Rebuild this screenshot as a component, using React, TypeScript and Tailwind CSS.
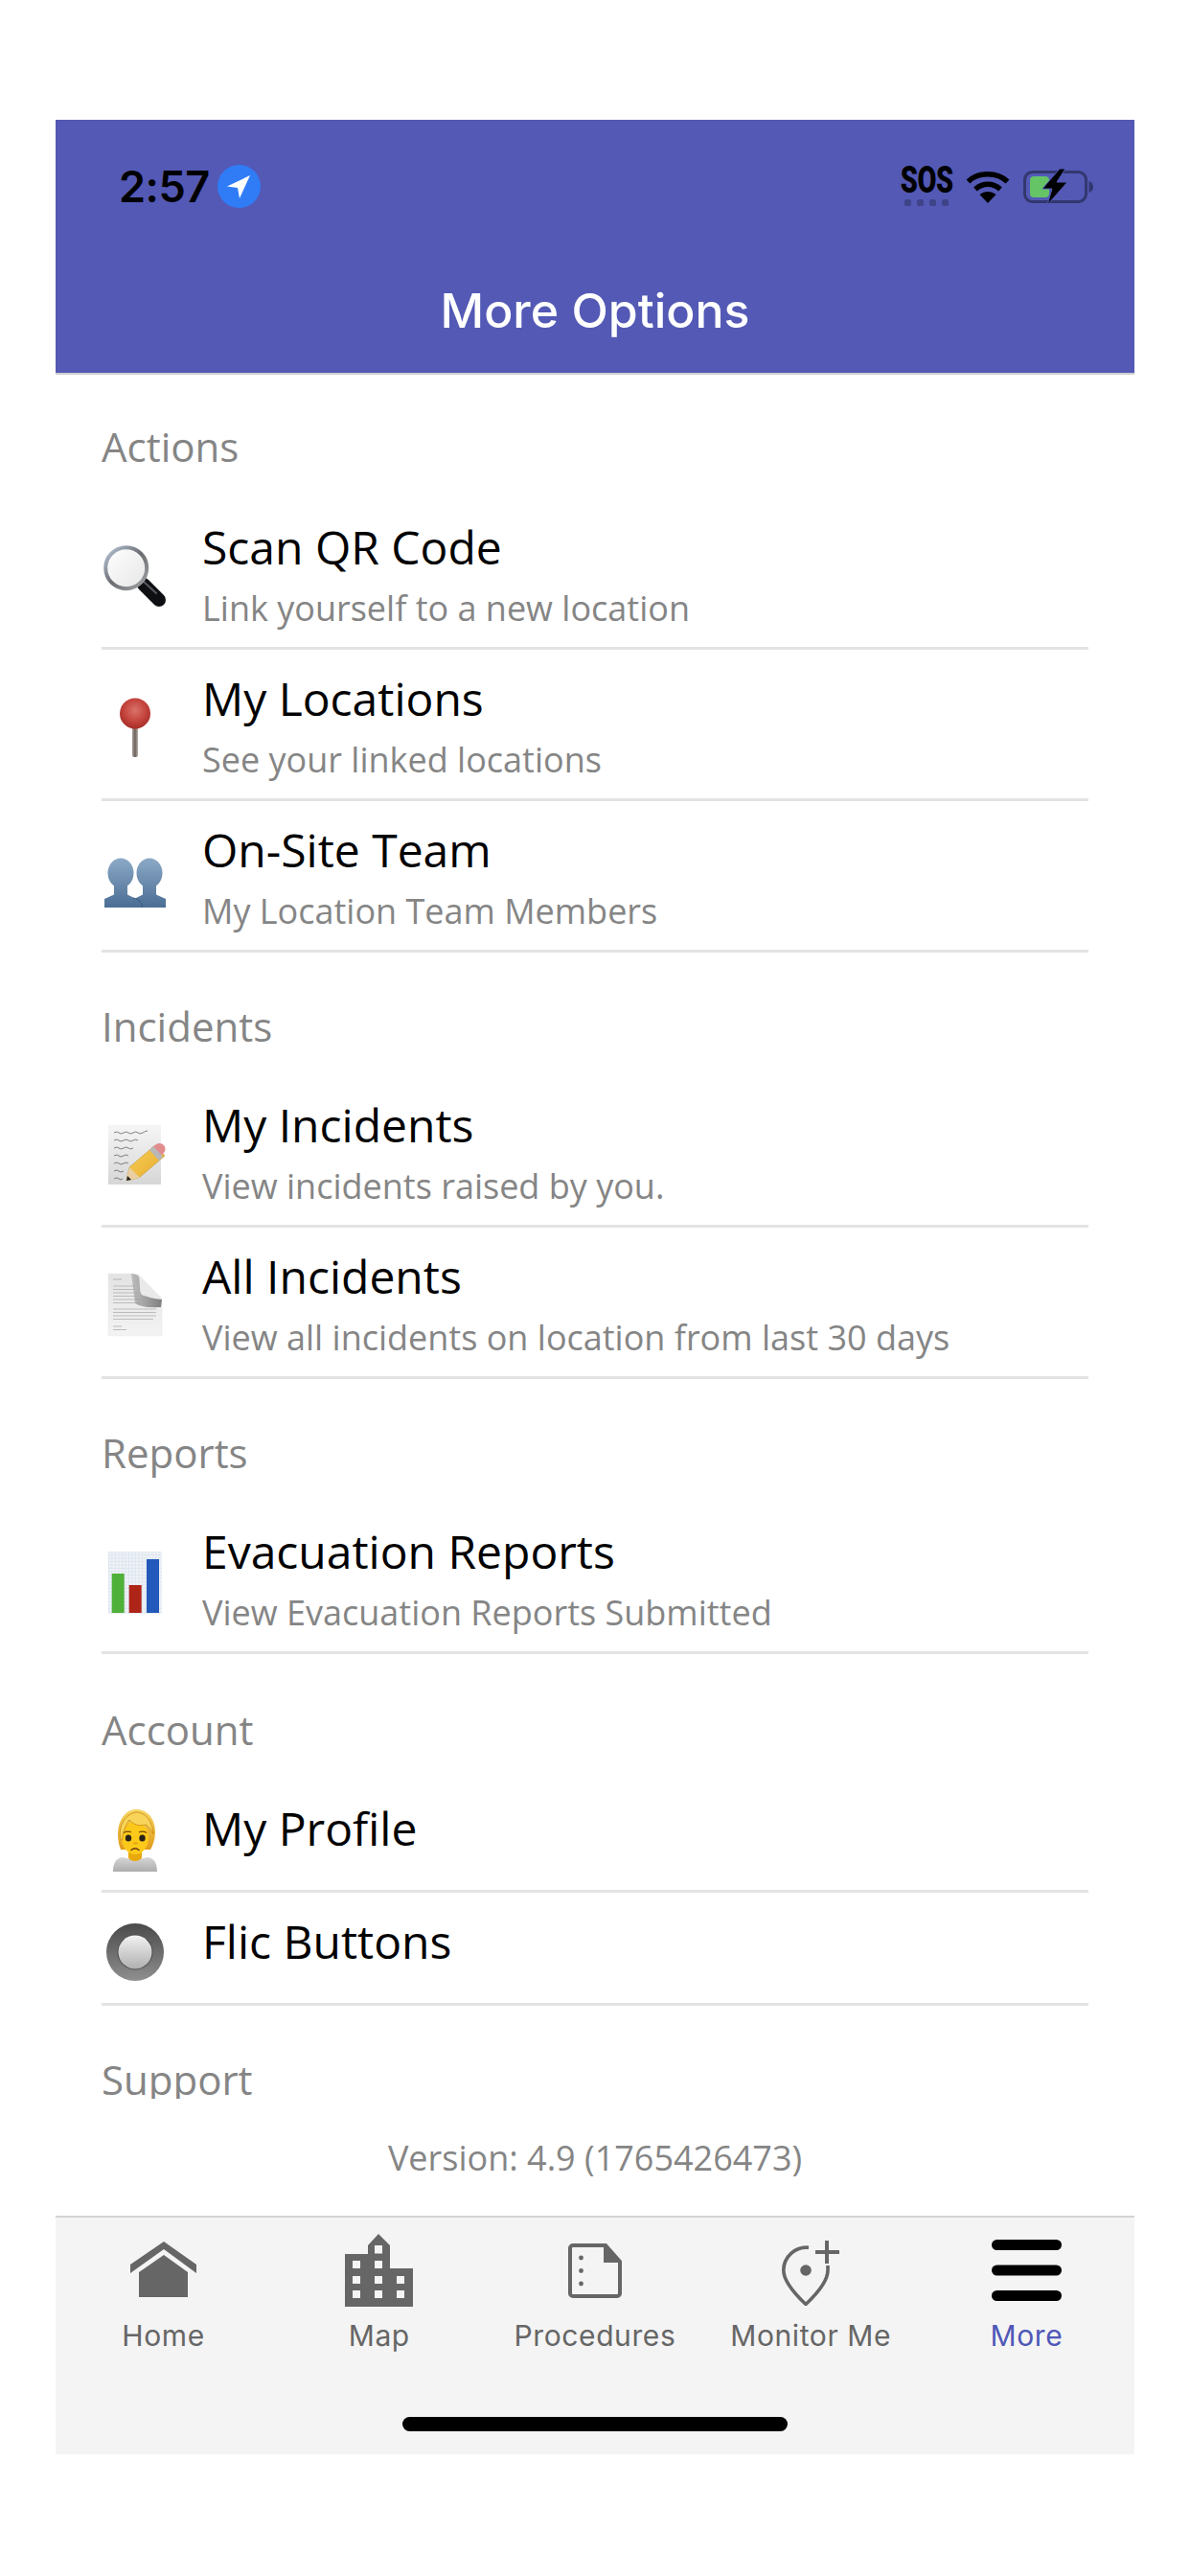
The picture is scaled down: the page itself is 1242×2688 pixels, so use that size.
import React from "react";

function Box({ children }: { children: React.ReactNode }) {
  return (
    <svg width="70" height="90" viewBox="0 0 70 90" className="shrink-0 overflow-visible">
      {children}
    </svg>
  );
}

const Magnifier = () => (
  <Box>
    <defs>
      <linearGradient id="lens" x1="0" y1="0" x2="1" y2="1">
        <stop offset="0" stopColor="#ffffff" />
        <stop offset="1" stopColor="#e6e6e6" />
      </linearGradient>
      <linearGradient id="rim" x1="0" y1="0" x2="1" y2="1">
        <stop offset="0" stopColor="#b9c8dc" />
        <stop offset="0.5" stopColor="#6a6c70" />
        <stop offset="1" stopColor="#a4a6a8" />
      </linearGradient>
    </defs>
    <line x1="44" y1="57" x2="60" y2="73" stroke="#0e0f12" strokeWidth="14" strokeLinecap="round" />
    <line x1="44" y1="54" x2="57" y2="66" stroke="#55585e" strokeWidth="2" strokeLinecap="round" />
    <circle cx="25.7" cy="39.7" r="21.5" fill="url(#lens)" stroke="url(#rim)" strokeWidth="4" />
  </Box>
);

const Pin = () => (
  <Box>
    <defs>
      <radialGradient id="ball" cx="0.5" cy="0.4" r="0.6">
        <stop offset="0" stopColor="#d9736a" />
        <stop offset="0.6" stopColor="#c4443d" />
        <stop offset="1" stopColor="#a62c28" />
      </radialGradient>
      <linearGradient id="stem" x1="0" y1="0" x2="1" y2="0">
        <stop offset="0" stopColor="#a8a09a" />
        <stop offset="0.5" stopColor="#6e625c" />
        <stop offset="1" stopColor="#b8b0aa" />
      </linearGradient>
    </defs>
    <rect x="32" y="46" width="6" height="33" rx="2" fill="url(#stem)" />
    <circle cx="35" cy="33.5" r="16" fill="url(#ball)" />
  </Box>
);

const People = () => (
  <Box>
    <defs>
      <linearGradient id="ppl" x1="0" y1="28" x2="0" y2="79" gradientUnits="userSpaceOnUse">
        <stop offset="0" stopColor="#8eabc8" />
        <stop offset="1" stopColor="#4d6f96" />
      </linearGradient>
    </defs>
    <g fill="url(#ppl)" transform="translate(0,-3)">
      <ellipse cx="20" cy="45" rx="13.5" ry="15.500" />
      <ellipse cx="50" cy="45" rx="13.5" ry="15.500" />
      <path d="M3 81V72L13 67.500V56H27V67.500L35 71.500L43 67.500V56H57V67.500L67 72V81z" />
    </g>
    <path d="M33 68c5 1 9 5 10 10" stroke="#3e6088" strokeWidth="1.2" fill="none" />
  </Box>
);

const NotePad = () => (
  <Box>
    <defs>
      <linearGradient id="np" x1="0" y1="0" x2="0" y2="1">
        <stop offset="0" stopColor="#f6f6f6" />
        <stop offset="1" stopColor="#d6d6d6" />
      </linearGradient>
      <linearGradient id="pc" x1="0" y1="0" x2="1" y2="1">
        <stop offset="0" stopColor="#f8d25a" />
        <stop offset="1" stopColor="#e5a92a" />
      </linearGradient>
    </defs>
    <g transform="translate(0,-2)">
      <rect x="7" y="20" width="55" height="62" fill="url(#np)" />
      <g stroke="#5c5c5c" strokeWidth="1" fill="none" opacity="0.75">
        <path d="M13 28q3-2 5 0t5 0 5 0 5 0 5 0 5 0 5-2" />
        <path d="M13 36q3-2 5 0t5 0 5 0 5 0 5 0" />
        <path d="M13 44q3-2 5 0t5 0 5 0 5 0" />
        <path d="M13 52q3-2 5 0t5 0 5 0" />
        <path d="M13 60q3-2 5 0t5 0 5 0" />
        <path d="M13 68q3-2 5 0t5 0" />
        <path d="M13 76q3-2 5 0t4 0" />
      </g>
      <path d="M26 78l3-14 27-23 10 11-27 23z" fill="url(#pc)" stroke="#b98a20" strokeWidth="0.5" />
      <path d="M26 78l3-14 11 11z" fill="#e9cfa3" />
      <path d="M26 78l1-5 4 4z" fill="#222" />
      <path d="M52 44l5-4c3-2 6-1 8 1s2 6 0 8l-4 4z" fill="#e18d8d" />
      <path d="M50 46l4-4 10 11-4 4z" fill="#b8b8b8" />
    </g>
  </Box>
);

const Document = () => (
  <Box>
    <defs>
      <linearGradient id="dc" x1="0" y1="0" x2="0" y2="1">
        <stop offset="0" stopColor="#e3e3e3" />
        <stop offset="1" stopColor="#f3f3f3" />
      </linearGradient>
      <linearGradient id="cu" x1="0" y1="0" x2="1" y2="0">
        <stop offset="0" stopColor="#a8a8a8" />
        <stop offset="1" stopColor="#444" />
      </linearGradient>
    </defs>
    <g transform="translate(0,-3)">
      <path d="M7 18h24q9 0 10 4l22 22v39H7z" fill="url(#dc)" stroke="#e9e9e9" strokeWidth="0.5" />
      <g stroke="#bbbbbb" strokeWidth="1.2">
        <path d="M12 24h9" />
        <path d="M12 31h23M12 34.500h23M12 38h25M12 41.500h25M12 45h28M12 48.500h28" />
        <path d="M12 55h45M12 58.500h45M12 62h45M12 65.500h42" />
        <path d="M12 73h9M12 76.500h14" />
      </g>
      <path d="M31 18q8 0 9 6t2 13q1 6 21 8l-1 8q-22 1-27-4z" fill="url(#cu)" opacity="0.65" />
      <path d="M39 19l24 25-19-3q-4-1-4-8z" fill="#e9e9e9" />
    </g>
  </Box>
);

const Chart = () => (
  <Box>
    <defs>
      <pattern id="gr" width="3.500" height="3.500" patternUnits="userSpaceOnUse">
        <rect width="3.500" height="3.500" fill="#eef2f7" />
        <path d="M0 0H3.500M0 0V3.500" stroke="#c4d1e0" strokeWidth="0.6" />
      </pattern>
    </defs>
    <rect x="7" y="18" width="56" height="65" fill="url(#gr)" />
    <rect x="10.700" y="41" width="13" height="41" fill="#4fb03a" />
    <rect x="28.700" y="53" width="13" height="29" fill="#ae2417" />
    <rect x="47" y="26" width="13" height="56" fill="#2259bb" />
  </Box>
);

const PersonEmoji = () => (
  <Box>
    <defs>
      <linearGradient id="sh" x1="0" y1="0" x2="0" y2="1">
        <stop offset="0" stopColor="#d6d6d6" />
        <stop offset="1" stopColor="#adadad" />
      </linearGradient>
      <linearGradient id="hr" x1="0" y1="0" x2="0" y2="1">
        <stop offset="0" stopColor="#f7d765" />
        <stop offset="1" stopColor="#e29b1a" />
      </linearGradient>
    </defs>
    <path d="M12 83c0-9 3-14 10-15l13 3 13-3c7 1 10 6 10 15z" fill="url(#sh)" />
    <path d="M17 44C17 28 26 18 36 18C48 18 56 28 56 42C56 48 54 55 51 60L20 60C18 55 17 50 17 44z" fill="url(#hr)" />
    <path d="M28 60h14v8c0 2-4 4-7 4s-7-2-7-4z" fill="#e9a90c" />
    <ellipse cx="35" cy="48" rx="14" ry="17" fill="#fcc91a" />
    <path
      d="M20 50C17 36 24 23 36 21C46 21 53 30 54 44C52 40 50 36 46 34C39 36 33 34 29 29C25 35 22 42 21.500 50z"
      fill="#f8d55a"
      stroke="#c9860f"
      strokeWidth="0.8"
    />
    <ellipse cx="28" cy="48" rx="3.200" ry="3.500" fill="#2a2118" />
    <ellipse cx="42.500" cy="48" rx="3.200" ry="3.500" fill="#2a2118" />
    <path d="M23 42.500q4-2.500 8-0.500M39 42q4-2 8 0.500" stroke="#7a4a08" strokeWidth="1.200" fill="none" />
    <path d="M34 53.500h3" stroke="#e3a30c" strokeWidth="1.800" strokeLinecap="round" />
    <path d="M31 60.500q4-3.500 8 0" stroke="#6b3d0c" strokeWidth="1.500" fill="none" strokeLinecap="round" />
  </Box>
);

const FlicButton = () => (
  <Box>
    <defs>
      <linearGradient id="fo" x1="0" y1="0" x2="0" y2="1">
        <stop offset="0" stopColor="#4a4a4a" />
        <stop offset="1" stopColor="#8f8f8f" />
      </linearGradient>
      <linearGradient id="fi" x1="0" y1="0" x2="0" y2="1">
        <stop offset="0" stopColor="#f2f2f2" />
        <stop offset="1" stopColor="#b0b0b0" />
      </linearGradient>
    </defs>
    <circle cx="35" cy="49" r="30" fill="url(#fo)" />
    <circle cx="35" cy="49" r="18.500" fill="#4e4e4e" />
    <circle cx="35" cy="49" r="17.500" fill="url(#fi)" />
  </Box>
);

function Row({
  icon,
  title,
  subtitle,
}: {
  icon: React.ReactNode;
  title: string;
  subtitle?: string;
}) {
  return (
    <div
      className={
        subtitle
          ? "flex h-[158px] items-center border-b-[3px] border-[#e3e3e3]"
          : "flex h-[118px] items-center border-b-[3px] border-[#e3e3e3]"
      }
    >
      <div className="flex w-[105px] shrink-0 justify-start">{icon}</div>
      <div className="flex flex-col self-start pt-[21px]">
        <span className="text-[48px] leading-[60px] text-black">{title}</span>
        {subtitle && (
          <span className="mt-[10px] text-[36px] leading-[48px] text-[#858585]">{subtitle}</span>
        )}
      </div>
    </div>
  );
}

function Section({ label, className, children }: { label: string; className: string; children?: React.ReactNode }) {
  return (
    <section>
      <h2 className={className + " text-[42px] leading-[40px] font-normal text-[#858585]"}>{label}</h2>
      {children}
    </section>
  );
}

const HomeIcon = () => (
  <svg width="70" height="60" viewBox="0 0 70 60" fill="#666666">
    <path d="M0 24L35 0l34 24v9L35 8 0 33z" />
    <path d="M9 32l26-18 25 18v26H9z" />
  </svg>
);

const MapIcon = () => {
  const cols = [8, 31, 54];
  const rows = [28, 44, 59];
  return (
    <svg width="71" height="76" viewBox="0 0 71 76">
      <path fill="#666666" d="M0 21h24V12L35 0l12 12v24h24v40H0z" />
      <g fill="#f4f4f4">
        <rect x="31" y="12" width="8" height="8.500" />
        {rows.map((y) =>
          cols.map((x) =>
            x === 54 && y === 28 ? null : <rect key={x + "-" + y} x={x} y={y} width="8" height="8" />
          )
        )}
      </g>
    </svg>
  );
};

const ProcIcon = () => (
  <svg width="57" height="57" viewBox="0 0 57 57">
    <path
      d="M6 2h34l15 17v33a3 3 0 0 1-3 3H6a3 3 0 0 1-3-3V5a3 3 0 0 1 3-3z"
      fill="none"
      stroke="#666666"
      strokeWidth="4"
    />
    <path d="M38 3h3l15 16v1H38z" fill="#666666" />
    <circle cx="14.500" cy="15" r="2.400" fill="#666666" />
    <circle cx="14.500" cy="28.500" r="2.400" fill="#666666" />
    <circle cx="14.500" cy="42" r="2.400" fill="#666666" />
  </svg>
);

const MonitorIcon = () => (
  <svg width="60" height="74" viewBox="0 -6 60 74">
    <path
      d="M28 7.200A24 24 0 0 0 1.800 31C1.800 43 16 58 25 66.500C34 58 48 43 48 31V26"
      fill="none"
      stroke="#666666"
      strokeWidth="3.600"
    />
    <circle cx="25" cy="31" r="5.800" fill="#666666" />
    <path d="M35 12h25M47 0v24" stroke="#666666" strokeWidth="4" fill="none" />
  </svg>
);

const MoreIcon = () => (
  <svg width="73" height="64" viewBox="0 0 73 64" fill="#000">
    <rect x="0" y="0" width="73" height="11" rx="5.500" />
    <rect x="0" y="26.500" width="73" height="11" rx="5.500" />
    <rect x="0" y="53" width="73" height="11" rx="5.500" />
  </svg>
);

function Tab({ icon, label, active }: { icon: React.ReactNode; label: string; active?: boolean }) {
  return (
    <div className="flex flex-col items-center">
      <div className="flex h-[84px] items-center justify-center">{icon}</div>
      <span
        className={
          active
            ? "mt-[9px] font-['Inter'] text-[30px] leading-[34px] tracking-[0.6px] whitespace-nowrap text-[#4f57b8]"
            : "mt-[9px] font-['Inter'] text-[30px] leading-[34px] tracking-[0.6px] whitespace-nowrap text-[#666666]"
        }
      >
        {label}
      </span>
    </div>
  );
}

export default function App() {
  return (
    <div className="flex h-[2688px] w-full flex-col bg-white px-[58px] pt-[125px] pb-[127px] font-['Open_Sans',sans-serif]">
      <header className="flex h-[266px] shrink-0 flex-col border-b-[2px] border-[#cfcfcf] bg-[#5359b5]">
        <div className="flex items-center justify-between pt-[47px] pr-[42px] pl-[66px]">
          <div className="flex items-center gap-[8px]">
            <span className="font-['Inter'] text-[45px] leading-[45px] font-semibold tracking-[-0.5px] text-black">
              2:57
            </span>
            <span className="flex h-[45px] w-[45px] items-center justify-center rounded-full bg-[#2f7cf6]">
              <svg width="30" height="30" viewBox="0 0 30 30" fill="#ffffff">
                <path d="M27 3L3 14.500l11 1.500 2 11z" />
              </svg>
            </span>
          </div>
          <div className="flex items-center gap-[14px]">
            <div className="flex w-[54px] flex-col items-center">
              <span className="origin-center scale-x-[0.76] font-['Roboto'] text-[38px] leading-[27px] font-black tracking-[-0.5px] text-black">
                SOS
              </span>
              <span className="mt-[6px] flex gap-[6px]">
                <i className="h-[7px] w-[7px] rounded-[2px] bg-[#3f4488]" />
                <i className="h-[7px] w-[7px] rounded-[2px] bg-[#3f4488]" />
                <i className="h-[7px] w-[7px] rounded-[2px] bg-[#3f4488]" />
                <i className="h-[7px] w-[7px] rounded-[2px] bg-[#3f4488]" />
              </span>
            </div>
            <svg width="46" height="36" viewBox="0 0 46 36" fill="none" stroke="#000" strokeWidth="5.500">
              <path d="M2.500 12.500C13 2 33 2 43.500 12.500" />
              <path d="M10 20.500c7.500-7 18.500-7 26 0" />
              <path d="M23 35L14.500 26c5-4 12-4 17 0z" fill="#000" stroke="none" />
            </svg>
            <svg width="74" height="38" viewBox="0 0 74 38">
              <rect x="1.500" y="3.500" width="64" height="31" rx="8" fill="none" stroke="#33376f" strokeWidth="3" />
              <rect x="7" y="8" width="20" height="22" rx="4" fill="#65c466" />
              <path d="M68.500 13c3 1 4.500 3 4.500 6s-1.500 5-4.500 6z" fill="#33376f" />
              <path
                d="M38 0L20 21h10l-5 17 21-24H35l9-14z"
                fill="#000"
                stroke="#5359b5"
                strokeWidth="1"
              />
            </svg>
          </div>
        </div>
        <h1 className="mt-[75px] text-center font-['Inter'] text-[50px] leading-[64px] font-medium text-white">
          More Options
        </h1>
      </header>

      <main className="min-h-0 flex-1 overflow-hidden px-[48px]">
        <Section label="Actions" className="pt-[55px] pb-[34px]">
          <Row icon={<Magnifier />} title="Scan QR Code" subtitle="Link yourself to a new location" />
          <Row icon={<Pin />} title="My Locations" subtitle="See your linked locations" />
          <Row icon={<People />} title="On-Site Team" subtitle="My Location Team Members" />
        </Section>
        <Section label="Incidents" className="pt-[57px] pb-[32px]">
          <Row icon={<NotePad />} title="My Incidents" subtitle="View incidents raised by you." />
          <Row
            icon={<Document />}
            title="All Incidents"
            subtitle="View all incidents on location from last 30 days"
          />
        </Section>
        <Section label="Reports" className="pt-[57px] pb-[32px]">
          <Row icon={<Chart />} title="Evacuation Reports" subtitle="View Evacuation Reports Submitted" />
        </Section>
        <Section label="Account" className="pt-[59px] pb-[32px]">
          <Row icon={<PersonEmoji />} title="My Profile" />
          <Row icon={<FlicButton />} title="Flic Buttons" />
        </Section>
        <Section label="Support" className="pt-[57px] pb-[32px]" />
      </main>

      <div className="flex h-[122px] shrink-0 justify-center pt-[39px] text-[36px] leading-[46px] text-[#858585]">
        Version: 4.9 (1765426473)
      </div>

      <nav className="relative grid h-[249px] shrink-0 grid-cols-5 border-t-[2px] border-[#d4d4d4] bg-[#f4f4f4] pt-[13px]">
        <Tab icon={<HomeIcon />} label="Home" />
        <Tab icon={<MapIcon />} label="Map" />
        <Tab icon={<ProcIcon />} label="Procedures" />
        <Tab icon={<MonitorIcon />} label="Monitor Me" />
        <Tab icon={<MoreIcon />} label="More" active />
        <div className="absolute bottom-[24px] left-1/2 h-[15px] w-[402px] -translate-x-1/2 rounded-full bg-black" />
      </nav>
    </div>
  );
}
